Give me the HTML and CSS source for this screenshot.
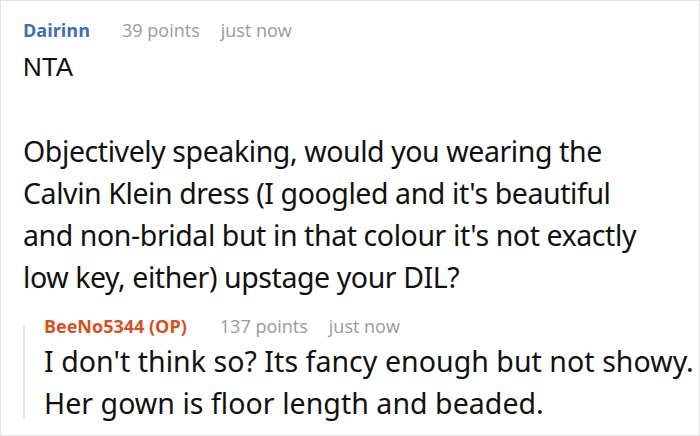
FILE: index.html
```html
<!DOCTYPE html>
<html>
<head>
<meta charset="utf-8">
<link rel="stylesheet" href="styles.css">
</head>
<body>
<div class="frame">
  <div class="meta">
    <span class="author">Dairinn</span>
    <span class="points">39 points</span>
    <span class="time">just now</span>
  </div>
  <div class="body">
    <p class="nta">NTA</p>
    <p class="blank">&nbsp;</p>
    <p class="text main-text">Objectively speaking, would you wearing the Calvin Klein dress (I googled and it's beautiful and non-bridal but in that colour it's not exactly low key, either) upstage your DIL?</p>
  </div>
  <div class="reply">
    <div class="meta">
      <span class="author op">BeeNo5344 (OP)</span>
      <span class="points">137 points</span>
      <span class="time">just now</span>
    </div>
    <p class="text reply-text">I don't think so? Its fancy enough but not showy. Her gown is floor length and beaded.</p>
  </div>
</div>
</body>
</html>
```
FILE: styles.css
```css
html, body {
  margin: 0;
  padding: 0;
  background: #fff;
}
.frame {
  width: 700px;
  height: 436px;
  box-sizing: border-box;
  border: 1px solid #e2e2e2;
  padding: 17px 0 0 22px;
  overflow: hidden;
  font-family: "Noto Sans", "Open Sans", sans-serif;
  color: #111;
}
.meta {
  display: flex;
  align-items: baseline;
  font-family: "Open Sans", "Noto Sans", sans-serif;
  font-size: 18px;
  line-height: 24px;
  height: 24px;
  white-space: nowrap;
}
.author {
  font-weight: 700;
  color: #3a6cbf;
  margin-right: 32px;
}
.author.op {
  color: #d5521f;
  margin-right: 33px;
}
.points {
  color: #9a9a9a;
  margin-right: 21px;
}
.time {
  color: #9a9a9a;
}
.body {
  margin-top: 4px;
}
p {
  margin: 0;
}
.nta {
  font-family: "Liberation Sans", Arial, sans-serif;
  font-size: 26px;
  line-height: 42px;
}
.blank {
  line-height: 42px;
  font-size: 26px;
}
.text {
  line-height: 42px;
}
.main-text {
  font-size: 28.5px;
  letter-spacing: -0.42px;
  width: 626px;
}
.reply {
  position: relative;
  margin-top: 16px;
  padding-left: 21px;
}
.reply::before {
  content: "";
  position: absolute;
  left: 0;
  top: 12px;
  width: 2px;
  height: 92px;
  background: #e4e4e4;
}
.reply-text {
  margin-top: 2px;
  font-size: 28.5px;
  letter-spacing: 0.05px;
  width: 660px;
}
```
